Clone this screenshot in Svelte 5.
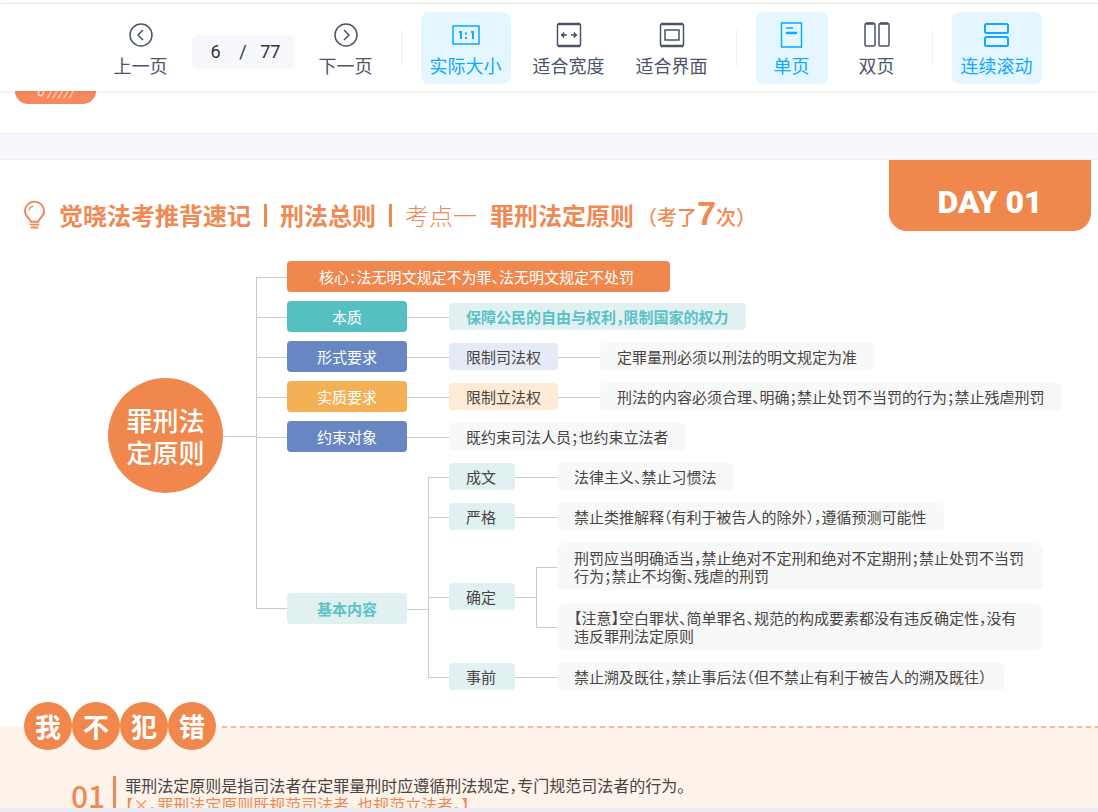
<script lang="ts">
	type MapNode = { label: string; kind: string; children?: MapNode[] };

	let page = $state('6');
	const total = 77;

	let zoomMode = $state('actual');
	let layout = $state('single');
	let continuous = $state(true);

	const branches: MapNode[] = [
		{ label: '核心：法无明文规定不为罪、法无明文规定不处罚', kind: 'main orange wide' },
		{
			label: '本质',
			kind: 'main teal',
			children: [{ label: '保障公民的自由与权利，限制国家的权力', kind: 'mint strong' }]
		},
		{
			label: '形式要求',
			kind: 'main blue',
			children: [
				{
					label: '限制司法权',
					kind: 'lavender',
					children: [{ label: '定罪量刑必须以刑法的明文规定为准', kind: 'plain' }]
				}
			]
		},
		{
			label: '实质要求',
			kind: 'main amber',
			children: [
				{
					label: '限制立法权',
					kind: 'cream',
					children: [
						{ label: '刑法的内容必须合理、明确；禁止处罚不当罚的行为；禁止残虐刑罚', kind: 'plain' }
					]
				}
			]
		},
		{
			label: '约束对象',
			kind: 'main blue',
			children: [{ label: '既约束司法人员；也约束立法者', kind: 'plain' }]
		},
		{
			label: '基本内容',
			kind: 'main mint strong',
			children: [
				{
					label: '成文',
					kind: 'mint',
					children: [{ label: '法律主义、禁止习惯法', kind: 'plain' }]
				},
				{
					label: '严格',
					kind: 'mint',
					children: [{ label: '禁止类推解释（有利于被告人的除外），遵循预测可能性', kind: 'plain' }]
				},
				{
					label: '确定',
					kind: 'mint',
					children: [
						{
							label: '刑罚应当明确适当，禁止绝对不定刑和绝对不定期刑；禁止处罚不当罚行为；禁止不均衡、残虐的刑罚',
							kind: 'plain long'
						},
						{
							label: '【注意】空白罪状、简单罪名、规范的构成要素都没有违反确定性，没有违反罪刑法定原则',
							kind: 'plain long'
						}
					]
				},
				{
					label: '事前',
					kind: 'mint',
					children: [
						{ label: '禁止溯及既往，禁止事后法（但不禁止有利于被告人的溯及既往）', kind: 'plain' }
					]
				}
			]
		}
	];
</script>

{#snippet branch(node: MapNode)}
	<li>
		<span class="node {node.kind}" class:parent={node.children}>{node.label}</span>
		{#if node.children}
			<ul>
				{#each node.children as child}
					{@render branch(child)}
				{/each}
			</ul>
		{/if}
	</li>
{/snippet}

<div class="reader">
	<header class="toolbar">
		<button class="tool" onclick={() => (page = String(Math.max(1, +page - 1)))}>
			<svg viewBox="0 0 26 26"><circle cx="13" cy="13" r="11" /><path d="M15 8l-5 5 5 5" /></svg>
			上一页
		</button>
		<div class="pager">
			<input aria-label="页码" bind:value={page} />
			<span>/</span>
			<span class="total">{total}</span>
		</div>
		<button class="tool" onclick={() => (page = String(Math.min(total, +page + 1)))}>
			<svg viewBox="0 0 26 26"><circle cx="13" cy="13" r="11" /><path d="M11 8l5 5-5 5" /></svg>
			下一页
		</button>
		<i class="divider"></i>
		<button class="tool" class:active={zoomMode === 'actual'} onclick={() => (zoomMode = 'actual')}>
			<svg viewBox="0 0 26 26">
				<rect x="0" y="4" width="26" height="18" />
				<path d="M6 10h2v7M18 10h2v7M13 10.5v2M13 15v2" stroke-width="2" />
			</svg>
			实际大小
		</button>
		<button class="tool" class:active={zoomMode === 'width'} onclick={() => (zoomMode = 'width')}>
			<svg viewBox="0 0 26 26">
				<rect x="1.5" y="2" width="23" height="22" rx="1" />
				<path d="M2 2h22M2 24h22" stroke-width="2.5" />
				<path d="M5 13h6M15 13h6" />
				<path d="M8 10l-3 3 3 3zM18 10l3 3-3 3z" fill="currentColor" stroke-width="0.5" />
			</svg>
			适合宽度
		</button>
		<button class="tool" class:active={zoomMode === 'page'} onclick={() => (zoomMode = 'page')}>
			<svg viewBox="0 0 26 26">
				<rect x="1.5" y="2" width="23" height="22" rx="1" />
				<path d="M2 2h22M2 24h22" stroke-width="2.5" />
				<rect x="6" y="8" width="14" height="10" />
			</svg>
			适合界面
		</button>
		<i class="divider"></i>
		<button class="tool" class:active={layout === 'single'} onclick={() => (layout = 'single')}>
			<svg viewBox="0 0 26 26">
				<rect x="2.5" y="1" width="20" height="24" />
				<path d="M7 6h7" />
				<path d="M7 11h11" stroke-width="2.5" />
			</svg>
			单页
		</button>
		<button class="tool" class:active={layout === 'double'} onclick={() => (layout = 'double')}>
			<svg viewBox="0 0 26 26">
				<rect x="1" y="1.5" width="10" height="22.5" rx="1" />
				<rect x="15" y="1.5" width="10" height="22.5" rx="1" />
				<path d="M2 1.5h8M16 1.5h8" stroke-width="2.5" />
			</svg>
			双页
		</button>
		<i class="divider"></i>
		<button class="tool" class:active={continuous} onclick={() => (continuous = !continuous)}>
			<svg viewBox="0 0 26 26">
				<rect x="1" y="2" width="23" height="9" rx="1.5" stroke-width="2" />
				<rect x="1" y="15" width="23" height="9" rx="1.5" stroke-width="2" />
			</svg>
			连续滚动
		</button>
	</header>

	<main class="pages">
		<section class="sheet previous">
			<span class="page-tag">6 /////</span>
		</section>

		<section class="sheet">
			<div class="sheet-head">
				<h1>
					<svg class="bulb" viewBox="0 0 24 30">
						<path d="M8 22c0-3-6-5-6-11a10 10 0 0 1 20 0c0 6-6 8-6 11z" />
						<path d="M6 10c1-3 3-4 5-4" stroke-width="1.5" />
						<path d="M7 25h10M8 28h8" />
					</svg>
					<span>觉晓法考推背速记</span>
					<i class="bar"></i>
					<span>刑法总则</span>
					<i class="bar"></i>
					<span class="light">考点一</span>
					<span>罪刑法定原则</span>
					<small>（考了<b>7</b>次）</small>
				</h1>
				<div class="day">DAY 01</div>
			</div>

			<div class="map">
				<div class="root">罪刑法<br />定原则</div>
				<ul class="trunk">
					{#each branches as item}
						{@render branch(item)}
					{/each}
				</ul>
			</div>

			<div class="mistakes">
				<div class="mistakes-head">
					<h2>
						{#each '我不犯错' as ch}
							<span>{ch}</span>
						{/each}
					</h2>
					<i class="dashes"></i>
				</div>
				<div class="item">
					<span class="number">01</span>
					<div class="item-text">
						<p>罪刑法定原则是指司法者在定罪量刑时应遵循刑法规定，专门规范司法者的行为。</p>
						<p class="wrong">【×。罪刑法定原则既规范司法者，也规范立法者。】</p>
					</div>
				</div>
			</div>
		</section>
	</main>
</div>

<style>
	:global(body) {
		margin: 0;
	}

	.reader {
		--orange: #f0874d;
		--line: #cbcbcb;
		display: flex;
		flex-direction: column;
		height: 100vh;
		box-sizing: border-box;
		border-bottom: 4px solid #ebecf3;
		overflow: hidden;
		background: linear-gradient(#fff, #fff) top / 100% 4px no-repeat #f6f8fc;
		font-family: 'Noto Sans CJK SC', 'Noto Sans', sans-serif;
		color: #4a4442;
	}

	ul, h1, h2, p {
		margin: 0;
		padding: 0;
		list-style: none;
	}

	/* toolbar */
	.toolbar {
		display: flex;
		align-items: center;
		justify-content: center;
		gap: 13px;
		flex-shrink: 0;
		margin-top: 3px;
		padding: 8px 0 7px 48px;
		border-top: 1px solid #ececee;
		background: #fff;
		box-shadow: 0 1px 4px rgba(90, 60, 30, 0.12);
		position: relative;
		z-index: 1;
	}

	.tool {
		display: flex;
		flex-direction: column;
		align-items: center;
		gap: 6px;
		min-width: 72px;
		padding: 10px 9px 8px;
		border: 0;
		border-radius: 8px;
		background: none;
		color: #4b5468;
		font-family: inherit;
		font-size: 18px;
		line-height: 22px;
		white-space: nowrap;
		cursor: pointer;
	}

	.tool svg {
		width: 26px;
		height: 26px;
		overflow: visible;
		fill: none;
		stroke: currentColor;
		stroke-width: 1.5;
	}

	.tool.active {
		background: #e4f6ff;
		color: #12a8fc;
	}

	.divider {
		width: 1px;
		height: 36px;
		margin: 0 6px;
		background: #ededf2;
	}

	.pager {
		display: flex;
		align-items: center;
		justify-content: space-between;
		box-sizing: border-box;
		width: 103px;
		height: 34px;
		margin: 8px 2px 0;
		padding: 0 14px;
		border-radius: 6px;
		background: #f7f8fc;
		color: #333;
		font: 18px/34px Roboto, sans-serif;
	}

	.pager input {
		width: 20px;
		padding: 0;
		border: 0;
		background: none;
		color: inherit;
		font: inherit;
		text-align: center;
	}

	/* pages */
	.pages {
		flex: 1;
		min-height: 0;
		display: flex;
		flex-direction: column;
		gap: 27px;
		overflow: hidden;
	}

	.sheet {
		flex-shrink: 0;
		background: #fff;
		box-shadow: 0 0 2px rgba(60, 70, 100, 0.15);
	}

	.previous {
		height: 42px;
	}

	.page-tag {
		display: block;
		width: 81px;
		height: 26px;
		margin: -13px 0 0 15px;
		border-radius: 13px;
		background: #f68a5e;
		color: #fde3d6;
		font-size: 14px;
		font-style: italic;
		line-height: 24px;
		text-align: center;
	}

	.sheet-head {
		display: flex;
		justify-content: space-between;
		align-items: flex-start;
		padding: 0 7px 26px 23px;
	}

	h1 {
		display: flex;
		align-items: center;
		gap: 13px;
		height: 40px;
		margin-top: 35px;
		color: #ef8a54;
		font-size: 24px;
		font-weight: 700;
		line-height: 40px;
		white-space: nowrap;
		font-feature-settings: 'halt';
	}

	h1 span,
	small {
		align-self: baseline;
	}

	.bulb {
		width: 23px;
		height: 30px;
		fill: none;
		stroke: currentColor;
		stroke-width: 2;
	}

	.bar {
		width: 3px;
		height: 23px;
		background: currentColor;
	}

	.light {
		font-weight: 300;
	}

	small {
		font-size: 20px;
		font-weight: 500;
	}

	small b {
		font: 700 34px/30px 'Liberation Sans', sans-serif;
	}

	.day {
		width: 202px;
		height: 71px;
		flex-shrink: 0;
		border-radius: 0 0 18px 18px;
		background: var(--orange);
		color: #fff;
		font: 900 32px/84px Roboto, sans-serif;
		text-align: center;
	}

	/* mind map */
	.map {
		display: flex;
		align-items: flex-start;
		padding-left: 108px;
		font-size: 15px;
		font-feature-settings: 'halt';
	}

	.root {
		display: flex;
		align-items: center;
		justify-content: center;
		position: relative;
		width: 115px;
		height: 115px;
		margin: 117px 33px 0 0;
		border-radius: 50%;
		background: var(--orange);
		color: #fff;
		font-size: 26px;
		font-weight: 500;
		line-height: 32px;
	}

	.root::after {
		content: '';
		position: absolute;
		left: 100%;
		top: 58px;
		width: 33px;
		height: 1px;
		background: var(--line);
	}

	.map ul {
		--gap: 13px;
		display: flex;
		flex-direction: column;
		gap: var(--gap);
		margin-left: 21px;
	}

	.map .trunk {
		--gap: 9px;
		margin-left: 0;
	}

	.map li {
		display: flex;
		align-items: center;
		position: relative;
		padding-left: 21px;
	}

	.map .trunk > :global(li) {
		padding-left: 31px;
	}

	.map li::before {
		content: '';
		position: absolute;
		left: 0;
		top: 50%;
		width: 31px;
		height: 1px;
		background: var(--line);
	}

	.map li::after {
		content: '';
		position: absolute;
		left: 0;
		top: 0;
		bottom: calc(-1 * var(--gap));
		width: 1px;
		background: var(--line);
	}

	.map li:first-child::after {
		top: 50%;
	}

	.map li:last-child::after {
		bottom: 50%;
	}

	/* the last branch hangs from its own node, lower than the middle of its list */
	.map .trunk > :global(li:last-child) {
		align-items: flex-start;
		padding-top: 2px;
	}

	.map .trunk > :global(li:last-child > .node) {
		margin-top: 130px;
	}

	.map .trunk > :global(li:last-child::before) {
		top: 147px;
	}

	.map .trunk > :global(li:last-child::after) {
		bottom: auto;
		height: 147px;
	}

	.node {
		position: relative;
		z-index: 1;
		flex-shrink: 0;
		box-sizing: border-box;
		min-width: 66px;
		padding: 0 17px;
		border-radius: 4px;
		line-height: 27px;
		white-space: nowrap;
	}

	.node.parent::after {
		content: '';
		position: absolute;
		left: 100%;
		top: 50%;
		width: 21px;
		height: 1px;
		background: var(--line);
	}

	.main {
		width: 120px;
		color: #fff;
		line-height: 31px;
		text-align: center;
	}

	.wide {
		width: auto;
		padding: 0 36px 0 32px;
	}

	.orange { background: var(--orange); }
	.teal { background: #56bfc1; }
	.blue { background: #6886c2; }
	.amber { background: #f4b055; }
	.mint { background: #e1f1f2; }
	.lavender { background: #e6eaf6; }
	.cream { background: #fdebd6; }
	.plain { background: #f7f8f8; }

	.strong {
		color: #5bc2c5;
		font-weight: 700;
	}

	.long {
		width: 486px;
		padding: 6px 17px 5px;
		border-radius: 8px;
		line-height: 18px;
		white-space: normal;
	}

	/* mistakes */
	.mistakes {
		margin-top: 36px;
		padding: 0 0 40px 24px;
		background: #fdf3ea;
	}

	.mistakes-head {
		display: flex;
		align-items: flex-start;
		gap: 6px;
	}

	h2 {
		display: flex;
		margin-top: -24px;
		color: #fff;
		font-size: 26px;
		font-weight: 700;
		line-height: 48px;
		text-align: center;
	}

	h2 span {
		width: 48px;
		height: 48px;
		border-radius: 50%;
		background: var(--orange);
	}

	.dashes {
		flex: 1;
		height: 2px;
		background: repeating-linear-gradient(90deg, #f3bd9b 0 5px, transparent 5px 9px);
	}

	.item {
		display: flex;
		align-items: flex-start;
		gap: 8px;
		margin: 26px 0 0 47px;
	}

	.number {
		color: #ef8a54;
		font-size: 30px;
		font-weight: 500;
		line-height: 38px;
	}

	.item-text {
		padding-left: 9px;
		border-left: 3px solid #ef8a54;
		font-size: 16px;
		line-height: 19px;
		font-feature-settings: 'halt';
	}

	.wrong {
		color: #ef8a54;
	}
</style>
